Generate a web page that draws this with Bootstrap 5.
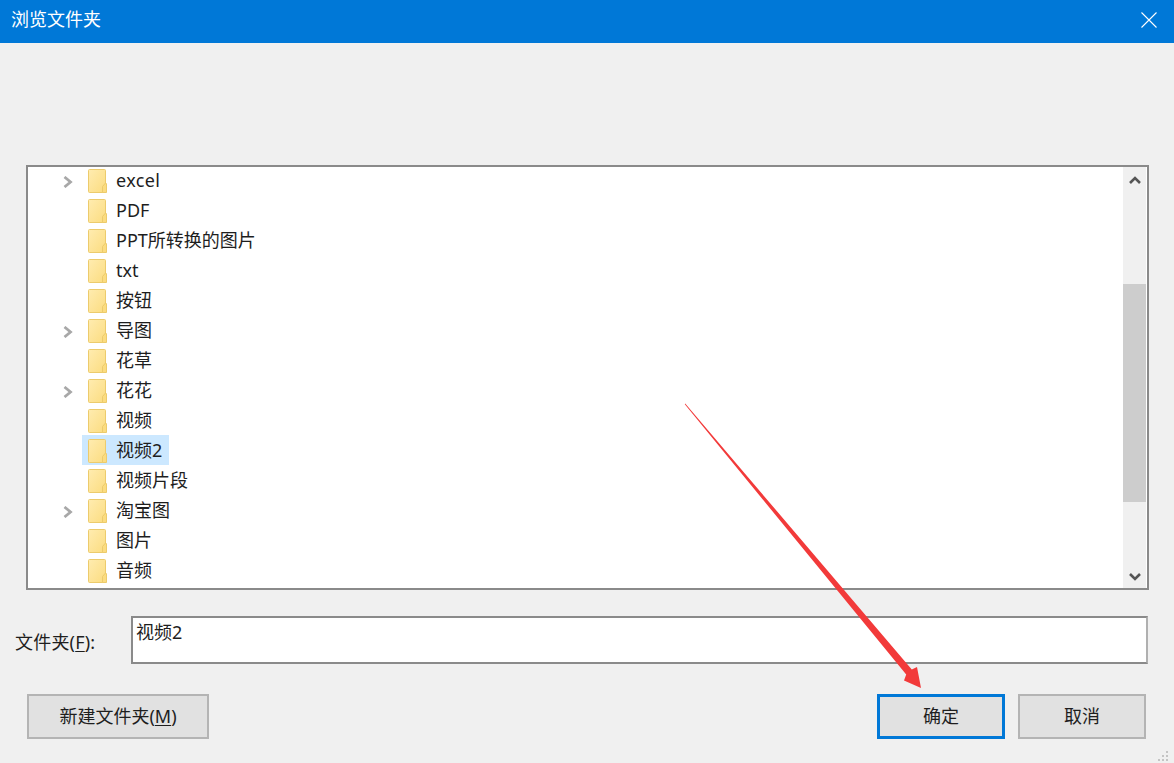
<!DOCTYPE html>
<html lang="zh-CN">
<head>
<meta charset="utf-8">
<title>浏览文件夹</title>
<link href="https://cdn.jsdelivr.net/npm/bootstrap@5.3.0/dist/css/bootstrap.min.css" rel="stylesheet">
<style>
html,body{height:763px;overflow:hidden}
body{background:#f0f0f0;color:#1e1e1e;font-family:"Noto Sans","Noto Sans CJK SC",sans-serif;font-size:18px;line-height:30px}
.dlg{position:relative;width:1174px;height:763px}
.titlebar{height:43px;background:#0078d7;color:#fff;padding:0 17px 3px 11px}
.title-text{padding-bottom:2px}
.tree-box{margin:122px 25px 0 26px;height:425px;background:#fff;border:2px solid #8a8a8a}
.tree-list{flex:1;margin-top:-2px;padding-left:35px}
.tree-row{height:30px;display:flex;align-items:center}
.twisty{width:25px;flex:none;display:flex}
.twisty svg{margin-top:3px}
.sel-wrap{display:inline-flex;align-items:center;height:30px;padding:0 7px 0 6px;margin-left:-6px;gap:9px}
.sel-wrap svg{margin-top:2px}
.sel-wrap.is-sel{background:#cce8ff}
.latin-wide{letter-spacing:.4px}
.sbar{width:23px;background:#f0f0f0;display:flex;flex-direction:column;margin-right:1px}
.sb-up{height:26px;display:flex;align-items:center;justify-content:center}
.sb-down{height:23px;display:flex;align-items:center;justify-content:center}
.sb-track{flex:1;padding-top:91px;padding-bottom:63px;display:flex}
.sb-thumb{flex:1;background:#cdcdcd}
.field-row{margin:26px 26px 0 15px;display:flex;gap:35px}
.field-label{line-height:53px;white-space:nowrap;width:81px;flex:none;font-size:18px;letter-spacing:.2px}
.field-input{flex:1;height:48px;background:#fff;border:2px solid #8a8a8a;border-right-color:#b0b0b0;padding:0 3px;line-height:29px}
.btn-row{margin:25px 28px 0 27px;display:flex}
.wbtn{height:45px;background:#e1e1e1;border:2px solid #b4b4b4;border-radius:0;color:#1e1e1e;font-size:18px;line-height:1;padding:0 0 2px;display:flex;align-items:center;justify-content:center}
.wbtn:hover{background:#e1e1e1;color:#1e1e1e;border-color:#b4b4b4}
.wbtn-new{width:182px}
.wbtn-ok{width:128px;border:3px solid #0078d7;margin-left:auto}
.wbtn-ok:hover{border-color:#0078d7}
.wbtn-cancel{width:128px;margin-left:13px}
.ul-key{text-decoration:underline;text-underline-offset:2px}
.overlay{position:absolute;left:0;top:0;pointer-events:none}
</style>
</head>
<body>
<svg width="0" height="0" class="position-absolute">
<defs>
<linearGradient id="fg" x1="0" y1="0" x2="1" y2="1"><stop offset="0" stop-color="#ffecb0"/><stop offset="1" stop-color="#fbdc80"/></linearGradient>
<symbol id="folder" viewBox="0 0 19 24">
<path d="M.5 1.5a1 1 0 0 1 1-1h15a1 1 0 0 1 1 1v22h-16a1 1 0 0 1-1-1z" fill="url(#fg)" stroke="#eccb6c"/>
<path d="M14.5 23.5v-6l3-3.5q1 .2 1 1v8.5z" fill="#fbdc80" stroke="#eccb6c"/>
</symbol>
<symbol id="chev" viewBox="0 0 10 12"><path d="M1.5 1 7.5 6 1.5 11" fill="none" stroke="#a8a8a8" stroke-width="2.8"/></symbol>
</defs>
</svg>
<div class="dlg">
  <div class="titlebar d-flex align-items-center justify-content-between">
    <span class="title-text">浏览文件夹</span>
    <svg width="16" height="16" viewBox="0 0 16 16"><path d="M.5.5l15 15M15.5.5l-15 15" stroke="#fff" stroke-width="1.1" fill="none"/></svg>
  </div>
  <div class="tree-box d-flex">
    <div class="tree-list">
      <div class="tree-row"><span class="twisty"><svg width="10" height="12"><use href="#chev"/></svg></span><span class="sel-wrap"><svg width="19" height="24"><use href="#folder"/></svg><span class="latin-wide">excel</span></span></div>
      <div class="tree-row"><span class="twisty"></span><span class="sel-wrap"><svg width="19" height="24"><use href="#folder"/></svg><span>PDF</span></span></div>
      <div class="tree-row"><span class="twisty"></span><span class="sel-wrap"><svg width="19" height="24"><use href="#folder"/></svg><span>PPT所转换的图片</span></span></div>
      <div class="tree-row"><span class="twisty"></span><span class="sel-wrap"><svg width="19" height="24"><use href="#folder"/></svg><span>txt</span></span></div>
      <div class="tree-row"><span class="twisty"></span><span class="sel-wrap"><svg width="19" height="24"><use href="#folder"/></svg><span>按钮</span></span></div>
      <div class="tree-row"><span class="twisty"><svg width="10" height="12"><use href="#chev"/></svg></span><span class="sel-wrap"><svg width="19" height="24"><use href="#folder"/></svg><span>导图</span></span></div>
      <div class="tree-row"><span class="twisty"></span><span class="sel-wrap"><svg width="19" height="24"><use href="#folder"/></svg><span>花草</span></span></div>
      <div class="tree-row"><span class="twisty"><svg width="10" height="12"><use href="#chev"/></svg></span><span class="sel-wrap"><svg width="19" height="24"><use href="#folder"/></svg><span>花花</span></span></div>
      <div class="tree-row"><span class="twisty"></span><span class="sel-wrap"><svg width="19" height="24"><use href="#folder"/></svg><span>视频</span></span></div>
      <div class="tree-row"><span class="twisty"></span><span class="sel-wrap is-sel"><svg width="19" height="24"><use href="#folder"/></svg><span>视频2</span></span></div>
      <div class="tree-row"><span class="twisty"></span><span class="sel-wrap"><svg width="19" height="24"><use href="#folder"/></svg><span>视频片段</span></span></div>
      <div class="tree-row"><span class="twisty"><svg width="10" height="12"><use href="#chev"/></svg></span><span class="sel-wrap"><svg width="19" height="24"><use href="#folder"/></svg><span>淘宝图</span></span></div>
      <div class="tree-row"><span class="twisty"></span><span class="sel-wrap"><svg width="19" height="24"><use href="#folder"/></svg><span>图片</span></span></div>
      <div class="tree-row"><span class="twisty"></span><span class="sel-wrap"><svg width="19" height="24"><use href="#folder"/></svg><span>音频</span></span></div>
    </div>
    <div class="sbar">
      <div class="sb-up"><svg width="12" height="8" viewBox="0 0 12 8"><path d="M1 7 6 2l5 5" fill="none" stroke="#555" stroke-width="2.6"/></svg></div>
      <div class="sb-track"><div class="sb-thumb"></div></div>
      <div class="sb-down"><svg width="12" height="8" viewBox="0 0 12 8"><path d="M1 1l5 5 5-5" fill="none" stroke="#555" stroke-width="2.6"/></svg></div>
    </div>
  </div>
  <div class="field-row">
    <label class="field-label">文件夹(<span class="ul-key">F</span>):</label>
    <div class="field-input">视频2</div>
  </div>
  <div class="btn-row">
    <button type="button" class="btn wbtn wbtn-new"><span>新建文件夹(<span class="ul-key">M</span>)</span></button>
    <button type="button" class="btn wbtn wbtn-ok">确定</button>
    <button type="button" class="btn wbtn wbtn-cancel">取消</button>
  </div>
  <svg class="overlay" width="1174" height="763" viewBox="0 0 1174 763">
    <path d="M685.2 403.5 911.8 669.5 917 667 921 688 904 680.5 906.2 674.5 684.8 404.3Z" fill="#f23a3a"/>
    <g fill="#c4c4c4"><rect x="1166" y="751" width="2" height="2"/><rect x="1162" y="755" width="2" height="2"/><rect x="1166" y="755" width="2" height="2"/><rect x="1158" y="759" width="2" height="2"/><rect x="1162" y="759" width="2" height="2"/><rect x="1166" y="759" width="2" height="2"/></g>
  </svg>
</div>
</body>
</html>
